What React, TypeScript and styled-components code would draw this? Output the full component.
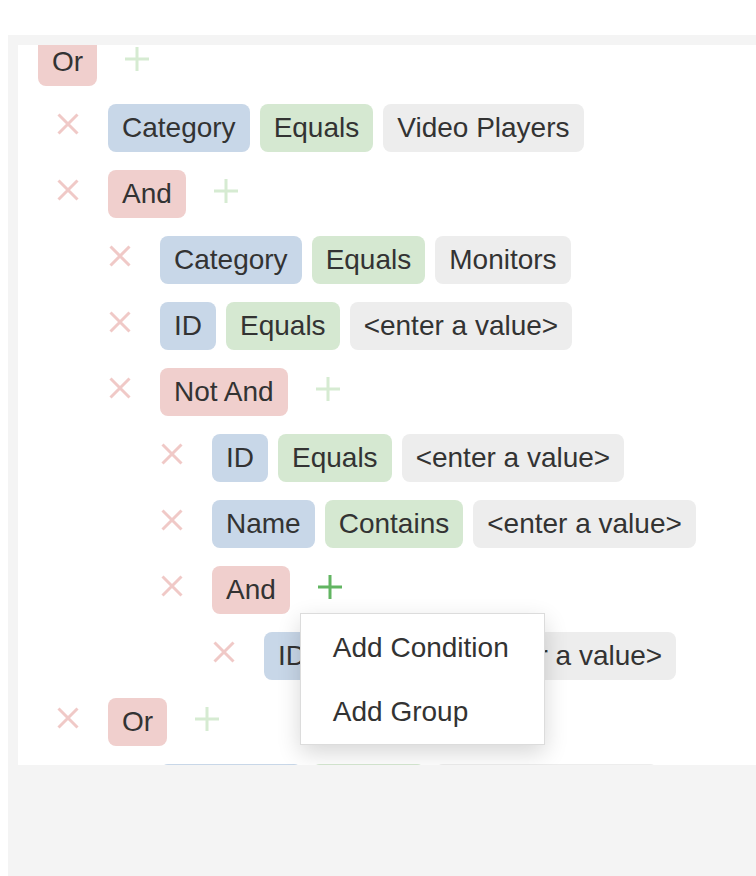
import React, { useLayoutEffect, useRef } from "react";
import styled, { createGlobalStyle } from "styled-components";

const GlobalStyle = createGlobalStyle`
  html, body { margin: 0; padding: 0; background: #ffffff; overflow: hidden; }
  body { font-family: "Liberation Sans", Arial, Helvetica, sans-serif; color: #333333; }
`;

const Page = styled.div`
  padding-top: 35px;
  padding-left: 8px;
  height: 876px;
  box-sizing: border-box;
`;

const Frame = styled.div`
  background: #f4f4f4;
  padding: 10px 0 0 10px;
  height: 841px;
  box-sizing: border-box;
`;

const Panel = styled.div`
  background: #ffffff;
  height: 720px;
  overflow: hidden;
  position: relative;
`;

const Tree = styled.div`
  display: flex;
  flex-direction: column;
  gap: 18px;
  padding: 20px 0 40px;
`;

const Row = styled.div<{ $level: number }>`
  display: flex;
  align-items: center;
  padding-left: ${(p) => (p.$level === 0 ? 20 : 30 + (p.$level - 1) * 52)}px;
  height: 48px;
`;

const IconButton = styled.button`
  width: 40px;
  height: 48px;
  padding: 0 0 8px;
  margin: 0 20px 0 0;
  border: none;
  background: transparent;
  display: flex;
  align-items: center;
  justify-content: center;
  cursor: pointer;
  box-sizing: border-box;
`;

const AddWrap = styled.div`
  position: relative;
  margin-left: 20px;
`;

const AddButton = styled.button`
  width: 40px;
  height: 48px;
  padding: 0 0 7px;
  border: none;
  background: transparent;
  display: flex;
  align-items: center;
  justify-content: center;
  cursor: pointer;
  box-sizing: border-box;
`;

const chipColors = {
  field: "#c8d7e8",
  op: "#d5e8d1",
  value: "#ededed",
  group: "#f0cfcd",
} as const;

type ChipKind = keyof typeof chipColors;

const Chip = styled.span<{ $kind: ChipKind }>`
  display: inline-block;
  height: 48px;
  line-height: 47px;
  padding: 0 14px 1px;
  box-sizing: border-box;
  border-radius: 8px;
  background: ${(p) => chipColors[p.$kind]};
  font-size: 28px;
  color: #333333;
  white-space: nowrap;
  & + & { margin-left: 10px; }
`;

const Menu = styled.div`
  position: absolute;
  left: -10px;
  top: 47px;
  width: 245px;
  box-sizing: border-box;
  background: #ffffff;
  border: 1px solid #dcdcdc;
  box-shadow: 0 8px 22px rgba(0, 0, 0, 0.16);
  padding: 0 0 2px;
  z-index: 5;
`;

const MenuItem = styled.div`
  padding: 14px 32px 10px;
  line-height: 40px;
  font-size: 28px;
  color: #333333;
  white-space: nowrap;
`;

const XIcon = () => (
  <svg width="22" height="22" viewBox="0 0 22 22">
    <path d="M1.5 1.5 L20.5 20.5 M20.5 1.5 L1.5 20.5" stroke="#f0c9c7" strokeWidth="3" fill="none" />
  </svg>
);

const PlusIcon = ({ active }: { active?: boolean }) => (
  <svg width="24" height="24" viewBox="0 0 24 24">
    <path d="M12 0 V24 M0 12 H24" stroke={active ? "#62b562" : "#d6ebd2"} strokeWidth="3" fill="none" />
  </svg>
);

type Node =
  | { type: "cond"; level: number; field: string; op: string; value: string }
  | { type: "group"; level: number; label: string; menu?: boolean };

const rows: Node[] = [
  { type: "group", level: 0, label: "Or" },
  { type: "cond", level: 1, field: "Category", op: "Equals", value: "Video Players" },
  { type: "group", level: 1, label: "And" },
  { type: "cond", level: 2, field: "Category", op: "Equals", value: "Monitors" },
  { type: "cond", level: 2, field: "ID", op: "Equals", value: "<enter a value>" },
  { type: "group", level: 2, label: "Not And" },
  { type: "cond", level: 3, field: "ID", op: "Equals", value: "<enter a value>" },
  { type: "cond", level: 3, field: "Name", op: "Contains", value: "<enter a value>" },
  { type: "group", level: 3, label: "And", menu: true },
  { type: "cond", level: 4, field: "ID", op: "Equals", value: "<enter a value>" },
  { type: "group", level: 1, label: "Or" },
  { type: "cond", level: 2, field: "Category", op: "Equals", value: "<enter a value>" },
];

export default function App() {
  const panelRef = useRef<HTMLDivElement>(null);
  useLayoutEffect(() => {
    if (panelRef.current) panelRef.current.scrollTop = 27;
  }, []);

  return (
    <>
      <GlobalStyle />
      <Page>
        <Frame>
          <Panel ref={panelRef}>
            <Tree>
              {rows.map((r, i) => (
                <Row key={i} $level={r.level}>
                  {r.level > 0 && (
                    <IconButton aria-label="Remove">
                      <XIcon />
                    </IconButton>
                  )}
                  {r.type === "cond" ? (
                    <>
                      <Chip $kind="field">{r.field}</Chip>
                      <Chip $kind="op">{r.op}</Chip>
                      <Chip $kind="value">{r.value}</Chip>
                    </>
                  ) : (
                    <>
                      <Chip $kind="group">{r.label}</Chip>
                      <AddWrap>
                        <AddButton aria-label="Add">
                          <PlusIcon active={r.menu} />
                        </AddButton>
                        {r.menu && (
                          <Menu>
                            <MenuItem>Add Condition</MenuItem>
                            <MenuItem>Add Group</MenuItem>
                          </Menu>
                        )}
                      </AddWrap>
                    </>
                  )}
                </Row>
              ))}
            </Tree>
          </Panel>
        </Frame>
      </Page>
    </>
  );
}
